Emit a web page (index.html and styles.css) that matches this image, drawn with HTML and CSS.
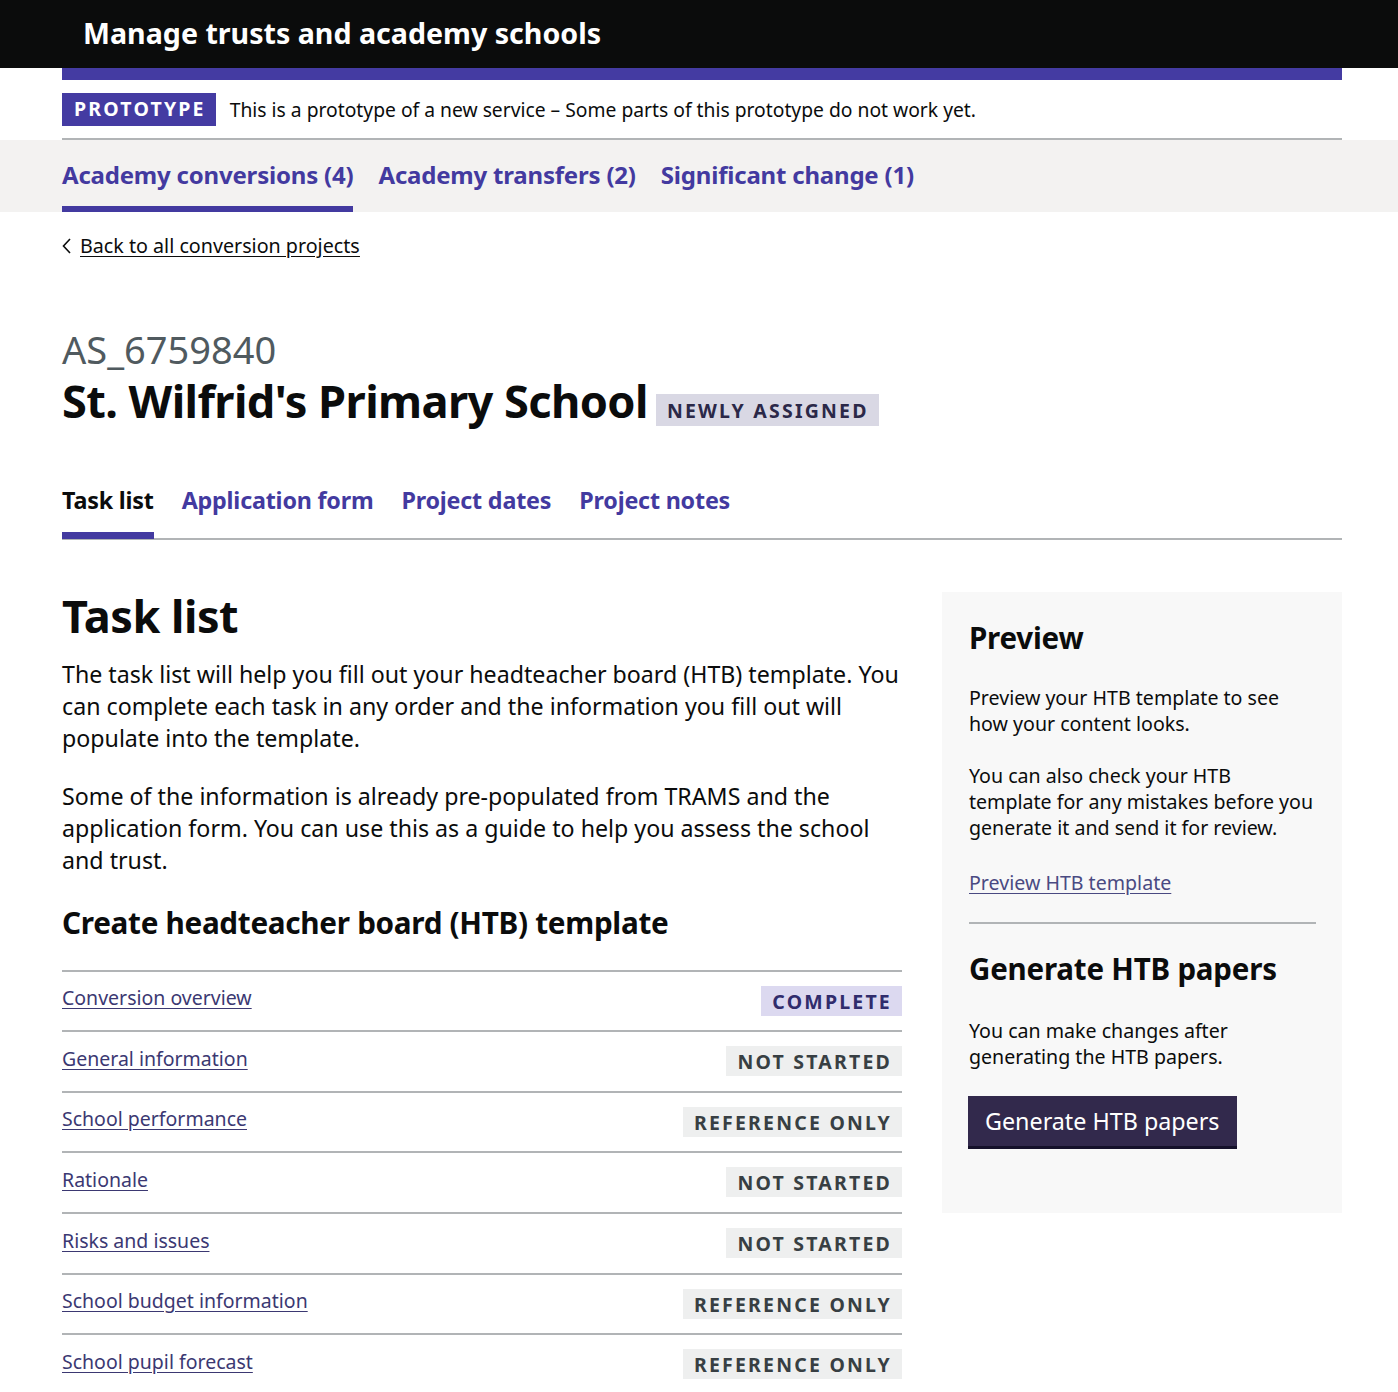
FILE: index.html
```html
<!DOCTYPE html>
<html lang="en">
<head>
<meta charset="utf-8">
<title>Manage trusts and academy schools</title>
<link rel="stylesheet" href="styles.css">
</head>
<body>
<header class="header">
  <div class="header-inner">
    <span class="service-name">Manage trusts and academy schools</span>
  </div>
</header>
<div class="container">
  <div class="header-stripe"></div>
  <div class="phase-banner">
    <strong class="tag tag-phase">Prototype</strong>
    <span class="phase-text">This is a prototype of a new service – Some parts of this prototype do not work yet.</span>
  </div>
</div>
<nav class="primary-nav">
  <ul class="container nav-list">
    <li class="nav-item active"><a href="#">Academy conversions (4)</a></li>
    <li class="nav-item"><a href="#">Academy transfers (2)</a></li>
    <li class="nav-item"><a href="#">Significant change (1)</a></li>
  </ul>
</nav>
<main class="container main">
  <a class="back-link" href="#"><svg class="chevron" width="9" height="16" viewBox="0 0 9 16" aria-hidden="true"><path d="M8 1 L1.5 8 L8 15" fill="none" stroke="#0b0c0c" stroke-width="1.6"/></svg><span>Back to all conversion projects</span></a>
  <p class="caption">AS_6759840</p>
  <h1 class="title"><span>St. Wilfrid's Primary School</span><strong class="tag tag-assigned">Newly assigned</strong></h1>
  <ul class="sub-nav">
    <li class="sub-item active"><a href="#">Task list</a></li>
    <li class="sub-item"><a href="#">Application form</a></li>
    <li class="sub-item"><a href="#">Project dates</a></li>
    <li class="sub-item"><a href="#">Project notes</a></li>
  </ul>
  <div class="grid">
    <div class="col-main">
      <h2 class="heading-xl">Task list</h2>
      <p class="body-l">The task list will help you fill out your headteacher board (HTB) template. You can complete each task in any order and the information you fill out will populate into the template.</p>
      <p class="body-l">Some of the information is already pre-populated from TRAMS and the application form. You can use this as a guide to help you assess the school and trust.</p>
      <h3 class="heading-m">Create headteacher board (HTB) template</h3>
      <ul class="task-list">
        <li class="task"><a href="#">Conversion overview</a><strong class="tag tag-complete">Complete</strong></li>
        <li class="task"><a href="#">General information</a><strong class="tag tag-grey">Not started</strong></li>
        <li class="task"><a href="#">School performance</a><strong class="tag tag-grey">Reference only</strong></li>
        <li class="task"><a href="#">Rationale</a><strong class="tag tag-grey">Not started</strong></li>
        <li class="task"><a href="#">Risks and issues</a><strong class="tag tag-grey">Not started</strong></li>
        <li class="task"><a href="#">School budget information</a><strong class="tag tag-grey">Reference only</strong></li>
        <li class="task"><a href="#">School pupil forecast</a><strong class="tag tag-grey">Reference only</strong></li>
      </ul>
    </div>
    <aside class="panel">
      <h2 class="panel-heading">Preview</h2>
      <p class="panel-text">Preview your HTB template to see how your content looks.</p>
      <p class="panel-text">You can also check your HTB template for any mistakes before you generate it and send it for review.</p>
      <p class="panel-text panel-link-row"><a class="panel-link" href="#">Preview HTB template</a></p>
      <hr class="panel-rule">
      <h2 class="panel-heading">Generate HTB papers</h2>
      <p class="panel-text">You can make changes after generating the HTB papers.</p>
      <button class="button" type="button">Generate HTB papers</button>
    </aside>
  </div>
</main>
</body>
</html>
```
FILE: styles.css
```css
* { box-sizing: border-box; }
html, body { margin: 0; padding: 0; }
body {
  font-family: "Noto Sans", "Liberation Sans", Arial, sans-serif;
  color: #0b0c0c;
  background: #ffffff;
}
a { color: inherit; }
ul { list-style: none; margin: 0; padding: 0; }
p, h1, h2, h3 { margin: 0; }

.container {
  width: 1280px;
  margin-left: 62px;
}

.header {
  background: #0b0c0c;
  height: 68px;
  display: flex;
  align-items: center;
}
.header-inner { padding-left: 83px; }
.service-name {
  color: #ffffff;
  font-weight: 700;
  font-size: 28.6px;
  line-height: 1;
}

.header-stripe {
  height: 12px;
  background: #443ba2;
}

.phase-banner {
  display: flex;
  align-items: center;
  padding: 13px 0 12px;
  border-bottom: 2px solid #b1b4b6;
}
.phase-text {
  margin-left: 14px;
  font-size: 19.3px;
  line-height: 25px;
}

.tag {
  display: inline-block;
  font-weight: 700;
  font-size: 19.5px;
  line-height: 22px;
  letter-spacing: 2.2px;
  text-transform: uppercase;
  padding: 5px 10px 3px 11px;
  white-space: nowrap;
}
.tag-phase { background: #443ba2; color: #ffffff; padding: 5px 10px 6px 12px; }
.tag-assigned { background: #d9d8e4; color: #2b2848; padding: 6px 10px 4px 11px; }
.tag-complete { background: #dcd9f0; color: #302c6c; }
.tag-grey { background: #eeefef; color: #383f43; }

.primary-nav { background: #f3f2f1; }
.nav-list { display: flex; gap: 25px; }
.nav-item a {
  display: block;
  padding: 20px 0 16px;
  border-bottom: 6px solid transparent;
  font-weight: 700;
  font-size: 24px;
  line-height: 30px;
  color: #433aa0;
  text-decoration: none;
  letter-spacing: -0.2px;
}
.nav-item.active a { border-bottom-color: #433aa0; }

.main { padding-top: 21px; }

.back-link {
  display: inline-flex;
  align-items: center;
  gap: 9px;
  font-size: 19.7px;
  line-height: 25px;
  color: #0b0c0c;
  text-underline-offset: 3px;
}
.back-link span { text-decoration: underline; }
.chevron { display: block; }

.caption {
  margin-top: 68px;
  font-size: 38px;
  line-height: 44px;
  color: #505a5f;
}

.title {
  display: flex;
  align-items: baseline;
  gap: 8px;
  margin-top: 5px;
  font-size: 45.2px;
  line-height: 50px;
  font-weight: 700;
  letter-spacing: -0.6px;
}
.title .tag { letter-spacing: 2.2px; }

.sub-nav {
  display: flex;
  gap: 28px;
  margin-top: 59px;
  border-bottom: 2px solid #b1b4b6;
}
.sub-item a {
  display: block;
  padding: 0 0 17px;
  margin-bottom: -1px;
  border-bottom: 7px solid transparent;
  font-weight: 700;
  font-size: 23.3px;
  line-height: 30px;
  color: #433aa0;
  text-decoration: none;
  letter-spacing: -0.2px;
}
.sub-item.active a { color: #0b0c0c; border-bottom-color: #433aa0; }

.grid {
  display: grid;
  grid-template-columns: 840px 400px;
  gap: 40px;
  margin-top: 52px;
  align-items: start;
}

.heading-xl {
  font-size: 45px;
  line-height: 48px;
  font-weight: 700;
  letter-spacing: -0.5px;
  margin-bottom: 18px;
}
.body-l {
  font-size: 23.2px;
  line-height: 32px;
  margin-bottom: 26px;
}
.heading-m {
  padding-top: 3px;
  font-size: 29.7px;
  line-height: 36px;
  font-weight: 700;
  letter-spacing: -0.3px;
  margin-bottom: 29px;
}

.task-list { border-top: 2px solid #b1b4b6; }
.task {
  display: flex;
  justify-content: space-between;
  align-items: center;
  padding: 14px 0 14.67px;
  border-bottom: 2px solid #b1b4b6;
}
.task a {
  font-size: 19.5px;
  line-height: 25px;
  color: #3b3872;
  text-underline-offset: 3px;
  margin-top: -6px;
}

.panel {
  background: #f8f8f8;
  padding: 28px 26px 67px 27px;
}
.panel-heading {
  font-size: 29.5px;
  line-height: 36px;
  font-weight: 700;
  letter-spacing: -0.2px;
  margin-bottom: 29px;
}
.panel-text {
  font-size: 19.6px;
  line-height: 26px;
  margin-bottom: 26px;
}
.panel-link-row { padding-top: 3px; }
.panel-link {
  color: #4a4a82;
  text-underline-offset: 3px;
}
.panel-rule {
  border: 0;
  border-top: 2px solid #b1b4b6;
  margin: 0 0 27px;
}
.panel-rule + .panel-heading { margin-bottom: 31px; }
.button {
  display: inline-block;
  background: #32294c;
  color: #ffffff;
  border: 0;
  box-shadow: 0 3px 0 #15112a;
  font-family: inherit;
  font-size: 23.3px;
  line-height: 28px;
  padding: 11px 17px;
  margin-left: -1px;
  cursor: pointer;
}
```
